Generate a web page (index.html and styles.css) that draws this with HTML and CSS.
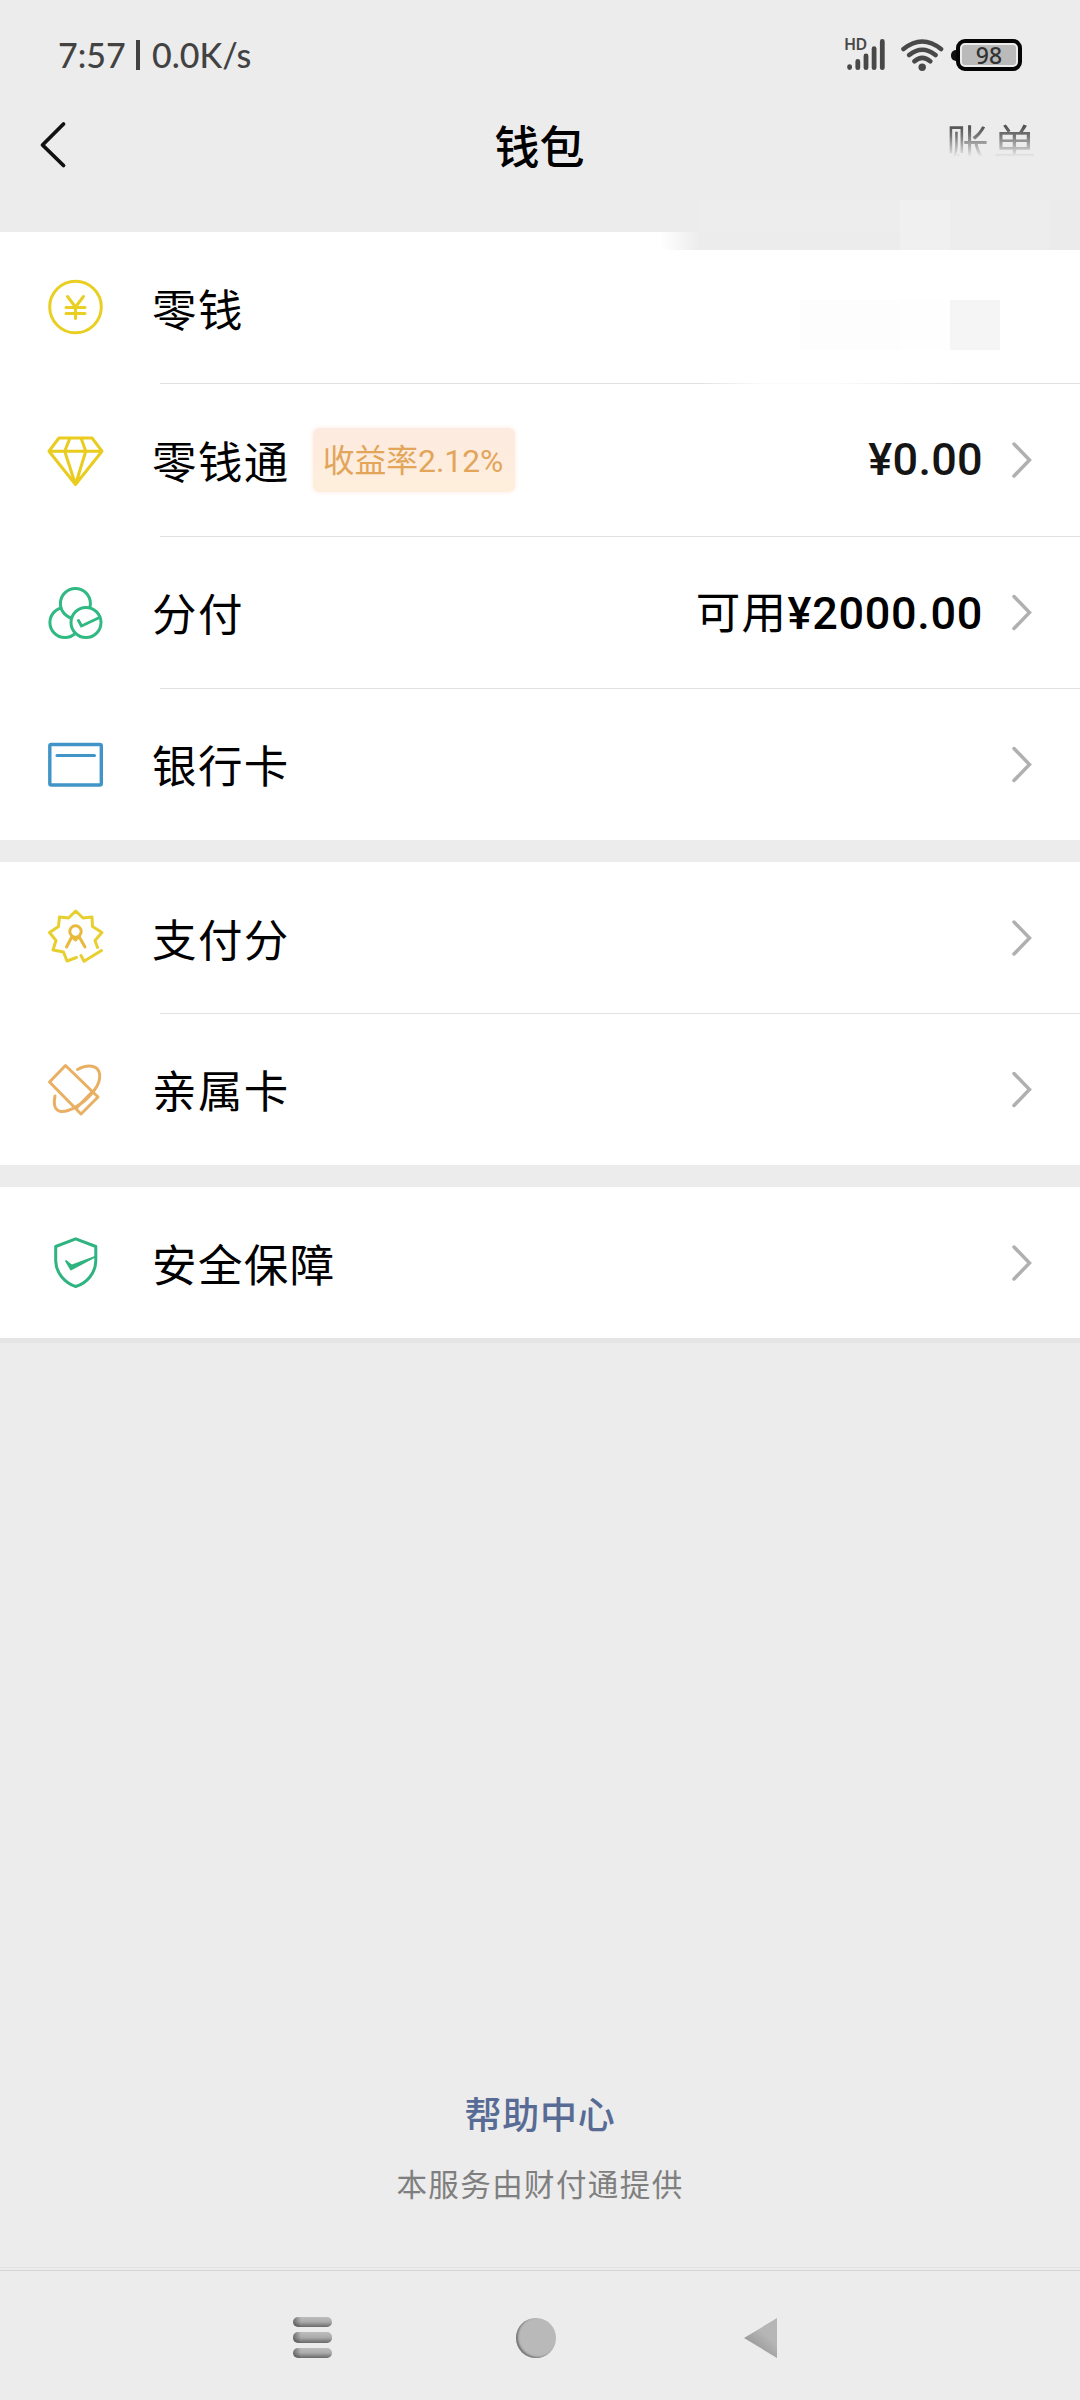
FILE: index.html
```html
<!DOCTYPE html>
<html lang="zh-CN">
<head>
<meta charset="utf-8">
<title>钱包</title>
<link rel="stylesheet" href="styles.css">
</head>
<body>
<div class="screen">
  <header class="status">
    <div class="status-left"><span class="time">7:57</span><i class="bar"></i><span class="speed">0.0K/s</span></div>
    <div class="status-right">
      <div class="signal">
        <span class="hd">HD</span>
        <svg width="40" height="34" viewBox="845 38 40 34" stroke="#484848" stroke-width="4.8" stroke-linecap="round"><path d="M849.6 66.6v1M857.8 61.5v6.2M866 56v11.7M874.1 48.6v19.1M882.3 41.4v26.3"/></svg>
      </div>
      <svg class="wifi" width="44" height="34" viewBox="900 38 44 34" fill="none" stroke="#484848" stroke-width="4.6" stroke-linecap="round"><path d="M903.5 49Q922.2 34 941 49M909.2 55Q922.2 44.5 935.5 55M914.5 61.2Q922.2 54.5 930.2 61.2"/><circle cx="922.2" cy="67.3" r="3.7" fill="#484848" stroke="none"/></svg>
      <div class="battery"><i class="nub"></i><div class="shell"><span class="level">98</span></div></div>
    </div>
  </header>

  <nav class="titlebar">
    <svg class="back" width="28" height="50" viewBox="39 120 28 50" fill="none" stroke="#111" stroke-width="3.8" stroke-linecap="round" stroke-linejoin="round"><path d="M63.5 124L42.5 145L63.5 165.5"/></svg>
    <h1 class="title">钱包</h1>
    <span class="bill">账单</span>
  </nav>
  <div class="tiles"><i></i><i></i><i></i><i></i></div>

  <main>
    <section class="group first">
      <div class="notch"><i></i><i></i><i></i><i></i></div>
      <div class="row short">
        <svg class="icon" viewBox="47 280 57 57" stroke="#e8cf22"><circle cx="75.5" cy="308" r="25.8"/><path d="M67.5 297.500L75.500 308L83.500 297.500M66 308.500H85M66 314.500H85M75.500 308V319.500"/></svg>
        <span class="label">零钱</span>
        <div class="mask"><i></i><i></i><i></i><i class="dark"></i></div>
      </div>
      <div class="row tall">
        <svg class="icon" viewBox="47 431.5 57 57" stroke="#e9cc1e"><path d="M59 438.5H92L102 451.7L75.5 485L49 451.7ZM49 451.7H102M70 438.5L64.7 451.7L75.5 485L85.8 451.7L81 438.5"/></svg>
        <span class="label">零钱通</span>
        <span class="badge">收益率2.12%</span>
        <span class="value soft">¥0.00</span>
        <svg class="arrow" viewBox="0 0 20 38"><path d="M2 3L17.500 19L2 35"/></svg>
      </div>
      <div class="row">
        <svg class="icon" viewBox="47 583.5 57 57" stroke="#30b982"><circle cx="64.9" cy="622" r="15"/><circle cx="75.4" cy="603" r="15" fill="#fff"/><circle cx="86" cy="622" r="15" fill="#fff"/><path d="M78.5 620L81.5 625.5L99.5 617" stroke-width="3"/></svg>
        <span class="label">分付</span>
        <span class="value lower"><span class="avail">可用</span>¥2000.00</span>
        <svg class="arrow" viewBox="0 0 20 38"><path d="M2 3.500L17.500 19.500L2 35.500"/></svg>
      </div>
      <div class="row">
        <svg class="icon" viewBox="47 735.5 57 57" stroke="#4094c8"><rect x="49.8" y="744" width="51.5" height="40.5" rx="1.5" stroke-width="3.4"/><path d="M57 755H94.5"/></svg>
        <span class="label">银行卡</span>
        <svg class="arrow" viewBox="0 0 20 38"><path d="M2 3.500L17.500 19.500L2 35.500"/></svg>
      </div>
    </section>

    <section class="group">
      <div class="row short">
        <svg class="icon" viewBox="47 909.5 57 57" stroke="#e8cf30"><path d="M76.5 958L67 961.5L63.5 952.5L53 950.5L56 941L49.5 933L58.5 927L59.5 917.5L68.5 918.5L75.7 911.5L83 918.5L92 917.5L92.5 927L102 933L95 941L97.5 948M81 956L84 961.8L101.5 951"/><g stroke="#e8b93a"><circle cx="75.5" cy="932" r="5.7"/><path d="M66.5 947.5L72 937L75.5 940.5L79 937L85 947.5"/></g></svg>
        <span class="label">支付分</span>
        <svg class="arrow" viewBox="0 0 20 38"><path d="M2 3L17.500 19L2 35"/></svg>
      </div>
      <div class="row">
        <svg class="icon" viewBox="47 1061.5 57 57" stroke="#e9b064"><path d="M65.5 1066L49.5 1082.5L81 1114.5L98 1097.5ZM76 1109L93 1091.5M77.5 1070C88 1064 98 1066 99.5 1074C101 1083 95 1090 90 1096C81 1106 69 1112.5 61 1112C54 1111 53.5 1104 55 1096.5"/></svg>
        <span class="label">亲属卡</span>
        <svg class="arrow" viewBox="0 0 20 38"><path d="M2 3.500L17.500 19.500L2 35.500"/></svg>
      </div>
    </section>

    <section class="group">
      <div class="row short">
        <svg class="icon" viewBox="47 1234 57 57" stroke="#2fb381"><path d="M75.7 1238.8L55.7 1246.5V1261C56 1273 65 1283 75.7 1286.5C87 1283 95.5 1273 95.800 1261V1246.500Z"/><path d="M66 1261L71 1269.500L94.500 1257L71.500 1265.500Z" fill="#2fb381" stroke-width="1.800"/></svg>
        <span class="label">安全保障</span>
        <svg class="arrow" viewBox="0 0 20 38"><path d="M2 3L17.500 19L2 35"/></svg>
      </div>
    </section>
  </main>

  <footer class="footer">
    <a class="help">帮助中心</a>
    <p class="provider">本服务由财付通提供</p>
  </footer>

  <div class="sysnav">
    <div class="menu"><i></i><i></i><i></i></div>
    <div class="home"></div>
    <svg class="prev" width="36" height="44" viewBox="0 0 36 44"><defs><linearGradient id="tri" x1="0" y1="1" x2=".5" y2=".3"><stop offset="0" stop-color="#858585"/><stop offset="1" stop-color="#b6b6b6"/></linearGradient></defs><path d="M1 22L34 2V42Z" fill="url(#tri)"/></svg>
  </div>
</div>
</body>
</html>
```
FILE: styles.css
```css
* { box-sizing: border-box; }
body { margin: 0; background: #ececec; }
.screen {
  width: 1080px; height: 2400px; overflow: hidden;
  display: flex; flex-direction: column;
  background: #ececec; color: #000;
  font-family: "Noto Sans CJK SC", "Noto Sans", sans-serif;
}
i { display: block; }
svg { display: block; flex: none; }

.status {
  height: 90px; padding: 20px 58px 0 58px;
  display: flex; justify-content: space-between; align-items: center;
}
.status-left {
  display: flex; align-items: center; color: #424242;
  font: 500 34px/44px Lato, sans-serif;
}
.time { width: 78px; }
.bar { width: 4px; height: 30px; background: #424242; margin-right: 12px; }
.status-right { display: flex; align-items: center; }
.signal { position: relative; margin-right: 15px; }
.hd {
  position: absolute; left: -1px; top: -3px;
  font: 600 16px/18px "Noto Sans", sans-serif; color: #484848; letter-spacing: -.7px;
}
.wifi { margin-right: 7px; }
.battery { display: flex; align-items: center; }
.nub { width: 5px; height: 11px; background: #111; border-radius: 5px 0 0 5px; }
.shell {
  width: 66px; height: 32px; padding: 2px;
  border: 4px solid #050505; border-radius: 9px;
}
.level {
  display: block; height: 20px; border-radius: 3px; background: #bababa;
  text-align: center; color: #333; font: 500 23px/20px "Noto Sans", sans-serif;
}

.titlebar {
  height: 110px; padding: 0 42px 0 39px;
  display: grid; grid-template-columns: 1fr auto 1fr; align-items: center;
}
.title { margin: 0 -1px 0 1px; font-size: 45px; line-height: 60px; font-weight: 500; }
.bill {
  justify-self: end; font-size: 43px; line-height: 60px; letter-spacing: 4px; margin: -6px -2px 0 0;
  background: linear-gradient(#505050 14px, #777 24px, #ececec 45px);
  -webkit-background-clip: text; background-clip: text; color: transparent;
}
.tiles { height: 32px; margin-left: 700px; display: grid; grid-template-columns: 200px 50px 100px 30px; }
.tiles i:nth-child(1), .tiles i:nth-child(3) { background: #ededed; }
.tiles i:nth-child(2) { background: #f0f0f0; }
.tiles i:nth-child(4) { background: #ebebeb; }

.group { background: #fff; margin-bottom: 22px; }
.group:last-child { margin-bottom: 0; border-bottom: 5px solid #e5e5e5; }
.first { position: relative; }
.notch {
  position: absolute; top: 0; right: 0; width: 420px; height: 18px;
  display: grid; grid-template-columns: 240px 50px 100px 30px;
}
.notch i { background: #ededed; }
.notch i:nth-child(1) { background: linear-gradient(90deg, #fff, #ececec 40px); }
.notch i:nth-child(2) { background: #f0f0f0; }
.notch i:nth-child(4) { background: #ebebeb; }
.row {
  height: 152px; padding: 0 48px 0 47px;
  display: flex; align-items: center;
}
.row.short { height: 151px; }
.row.tall { height: 153px; }
.row + .row { background: linear-gradient(#e2e2e2, #e2e2e2) 160px 0 / 920px 1px no-repeat; }
.first .row.tall {
  background: linear-gradient(90deg, #e2e2e2 540px, #fafafa 600px, #fafafa 680px, #e2e2e2 800px) 160px 0 / 920px 1px no-repeat;
}
.icon {
  width: 57px; height: 57px; fill: none; stroke-width: 3;
  stroke-linecap: round; stroke-linejoin: round; overflow: visible;
}
.label { margin-left: 48px; font-size: 44.5px; line-height: 60px; letter-spacing: 1.4px; white-space: nowrap; }
.arrow {
  width: 20px; height: 38px; margin-left: auto;
  fill: none; stroke: #b0b0b0; stroke-width: 3.5; stroke-linecap: round;
}
.badge {
  width: 202px; height: 64px; margin-left: 23px; padding-left: 10px;
  background: linear-gradient(#fdeae0, #feefdc); border-radius: 6px; box-shadow: 0 0 5px #fdeae0;
  color: #e2a55a; white-space: nowrap;
  font: 400 31.8px/66px Roboto, "Noto Sans CJK SC", sans-serif;
}
.value {
  margin-left: auto; white-space: nowrap;
  font: 500 45px/60px Roboto, "Noto Sans CJK SC", sans-serif; letter-spacing: .3px;
}
.soft { color: #151515; }
.lower { padding-top: 4px; letter-spacing: .7px; }
.avail { font-weight: 400; font-size: 44.5px; letter-spacing: 1.4px; }
.value + .arrow { margin-left: 29px; }
.mask { display: flex; margin-left: auto; margin-right: 32px; padding-top: 34px; }
.mask i { width: 50px; height: 50px; background: #fdfdfd; }
.mask i:nth-child(3) { background: #fefefe; }
.mask .dark { background: #f5f5f5; }

.footer { margin-top: auto; padding-bottom: 62px; text-align: center; }
.help {
  display: block; color: #576b95; font-size: 37px; line-height: 50px;
  font-weight: 500; letter-spacing: .8px;
}
.provider { margin: 23px 0 0; color: #7f7f7f; font-size: 30.5px; line-height: 44px; letter-spacing: 1.4px; }

.sysnav {
  flex: none; height: 133px; padding: 7px 301px 0 293px;
  border-top: 1px solid #e2e2e2;
  background: linear-gradient(#d4d4d4, #d4d4d4) 0 2px / 100% 1px no-repeat;
  display: flex; justify-content: space-between; align-items: center;
}
.menu { display: grid; gap: 5px; }
.menu i {
  width: 39px; height: 10.5px; border-radius: 5px;
  background: linear-gradient(90deg, #3338 0, #3330 8px), linear-gradient(#bdbdbd, #aaa 50%, #696969);
}
.home { width: 40px; height: 40px; border-radius: 50%; background: #b9b9b9; box-shadow: inset 2px -1px 2px #777; margin-right: 3px; }
```
